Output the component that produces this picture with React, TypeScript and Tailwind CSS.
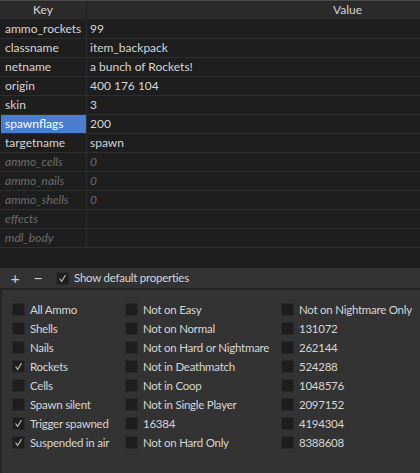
import React from "react";

const rows: { k: string; v: string; def?: boolean; sel?: boolean }[] = [
  { k: "ammo_rockets", v: "99" },
  { k: "classname", v: "item_backpack" },
  { k: "netname", v: "a bunch of Rockets!" },
  { k: "origin", v: "400 176 104" },
  { k: "skin", v: "3" },
  { k: "spawnflags", v: "200", sel: true },
  { k: "targetname", v: "spawn" },
  { k: "ammo_cells", v: "0", def: true },
  { k: "ammo_nails", v: "0", def: true },
  { k: "ammo_shells", v: "0", def: true },
  { k: "effects", v: "", def: true },
  { k: "mdl_body", v: "", def: true },
];

const col1 = [
  ["All Ammo", false],
  ["Shells", false],
  ["Nails", false],
  ["Rockets", true],
  ["Cells", false],
  ["Spawn silent", false],
  ["Trigger spawned", true],
  ["Suspended in air", true],
] as const;
const col2 = [
  "Not on Easy",
  "Not on Normal",
  "Not on Hard or Nightmare",
  "Not in Deathmatch",
  "Not in Coop",
  "Not in Single Player",
  "16384",
  "Not on Hard Only",
];
const col3 = [
  "Not on Nightmare Only",
  "131072",
  "262144",
  "524288",
  "1048576",
  "2097152",
  "4194304",
  "8388608",
];

function Check() {
  return (
    <svg width="13" height="13" viewBox="0 0 13 13" className="block">
      <path d="M3 6.5 L5.5 10 L10 2.5" fill="none" stroke="#b8b8b8" strokeWidth="1.4" />
    </svg>
  );
}

function Box({ checked }: { checked?: boolean }) {
  return (
    <div className="w-[13px] h-[13px] bg-[#1e1e1e] border border-[#2a2a2a] flex items-center justify-center shrink-0">
      {checked ? <Check /> : null}
    </div>
  );
}

function Flag({ label, checked }: { label: string; checked?: boolean }) {
  return (
    <div className="flex items-center h-[19px] gap-[5px]">
      <Box checked={checked} />
      <span className="whitespace-nowrap">{label}</span>
    </div>
  );
}

export default function App() {
  return (
    <div
      className="w-[420px] h-[473px] bg-[#1e1e1e] text-[12px] text-[#d6d6d6] flex flex-col overflow-hidden"
      style={{ fontFamily: 'Lato, "Noto Sans", sans-serif' }}
    >
      <div className="h-px bg-[#4a4a4a]" />
      <div className="flex h-[19px] bg-[#2b2b2b] border-b border-[#232323] leading-[18px]">
        <div className="w-[87px] border-r border-[#1c1c1c] text-center">Key</div>
        <div className="flex-1 pl-[246px]">Value</div>
      </div>
      <div className="flex flex-col">
        {rows.map((r) => (
          <div key={r.k} className="flex h-[19px] border-b border-[#2e2e2e] leading-[18px]">
            <div className="w-[87px] shrink-0 border-r border-[#2e2e2e] pl-[1px]">
              <div
                className={`h-[18px] pl-[4px] whitespace-nowrap ${
                  r.sel ? "bg-[#4a7dd1] text-white" : ""
                } ${r.def ? "italic text-[#6c6c6c]" : ""}`}
              >
                {r.k}
              </div>
            </div>
            <div className={`flex-1 pl-[3px] whitespace-nowrap ${r.def ? "italic text-[#6c6c6c]" : ""}`}>{r.v}</div>
          </div>
        ))}
      </div>
      <div className="flex-1" />
      <div className="h-[20px] bg-[#333333] flex items-center text-[11.5px] tracking-[-0.25px]">
        <span className="w-[30px] text-center text-[16px] leading-none text-[#cfcfcf]">+</span>
        <span className="w-[16px] text-center text-[16px] leading-none text-[#cfcfcf]">−</span>
        <div className="ml-[10px] flex items-center gap-[5px]">
          <Box checked />
          <span>Show default properties</span>
        </div>
      </div>
      <div className="h-[2px] bg-[#242424]" />
      <div className="h-[183px] bg-[#333333] border-l-2 border-[#262626] pl-[10px] pt-[10px] flex text-[11.5px] tracking-[-0.25px]">
        <div className="flex flex-col w-[113px] shrink-0">
          {col1.map(([l, c]) => (
            <Flag key={l} label={l} checked={c} />
          ))}
        </div>
        <div className="flex flex-col w-[156px] shrink-0">
          {col2.map((l) => (
            <Flag key={l} label={l} />
          ))}
        </div>
        <div className="flex flex-col shrink-0">
          {col3.map((l) => (
            <Flag key={l} label={l} />
          ))}
        </div>
      </div>
    </div>
  );
}
